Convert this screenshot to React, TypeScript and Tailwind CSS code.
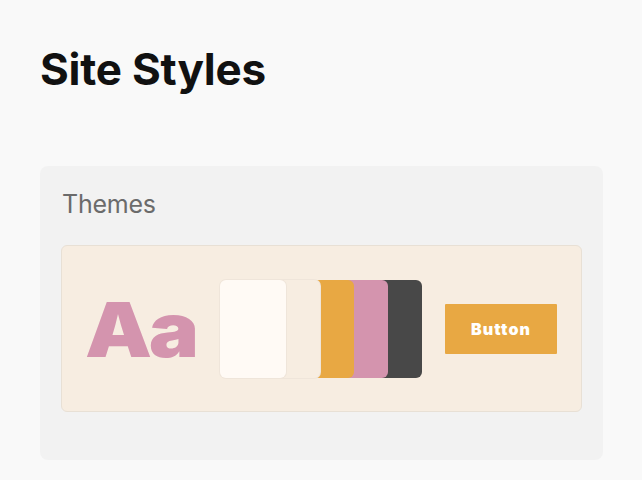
import React from 'react';

const swatches = [
  { color: 'bg-[#fffaf5]', z: 'z-50' },
  { color: 'bg-[#f7ede1]', z: 'z-40' },
  { color: 'bg-[#e8a843]', z: 'z-30' },
  { color: 'bg-[#d494ae]', z: 'z-20' },
  { color: 'bg-[#484848]', z: 'z-10' },
];

export default function App() {
  return (
    <div className="min-h-screen bg-[#f9f9f9] px-10 pt-[43px] font-['Inter',sans-serif]">
      <h1 className="text-[44px] leading-[52px] font-bold text-[#111111] tracking-[-0.005em]">
        Site Styles
      </h1>

      {/* Panneau des thèmes */}
      <div className="mt-[71px] w-[563px] rounded-lg bg-[#f2f2f2] px-[21px] pt-[22px] pb-[48px]">
        <h2 className="text-[25px] leading-[32px] text-[#6b6b6b] pl-[1px] tracking-[-0.01em]">Themes</h2>

        <div className="mt-[25px] flex h-[167px] items-center rounded-md border border-[#e8e0d5] bg-[#f7ede1] pl-[23px]">
          <div className="w-[135px]">
            <span className="inline-block origin-left scale-x-[1.11] text-[76px] leading-none font-black tracking-[-0.04em] text-[#d494ae]">
              Aa
            </span>
          </div>

          <div className="flex">
            {swatches.map((s, i) => (
              <div
                key={i}
                className={`relative h-[98px] w-[66px] rounded-[6px] ${s.color} ${s.z} ${i > 0 ? '-ml-[32px]' : ''} ${i < 2 ? 'shadow-[0_0_0_1px_#efe5da]' : ''}`}
              />
            ))}
          </div>

          <button className="ml-[23px] flex h-[50px] w-[112px] items-center justify-center rounded-[1px] bg-[#e8a843] text-[16px] font-black tracking-[0.07em] text-white">
            Button
          </button>
        </div>
      </div>
    </div>
  );
}
